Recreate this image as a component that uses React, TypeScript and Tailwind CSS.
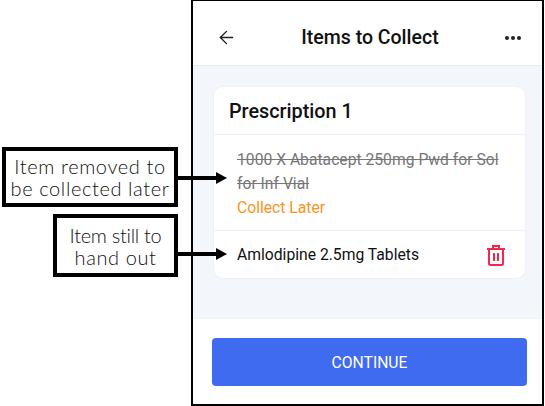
import { ArrowLeft } from "lucide-react";

const Callout = ({ lines, box, arrowTop }: { lines: { text: string, className: string }[], box: string, arrowTop: string }) => {
    return (
        <div className={`relative flex flex-col items-center justify-center border-[4px] border-black bg-white text-[20px] leading-[22px] text-[#111] font-['Lato',sans-serif] font-light ${box}`}>
            {lines.map((line) => (
                <span key={line.text} className={`whitespace-nowrap ${line.className}`}>{line.text}</span>
            ))}
            {/* Arrow pointing into the phone */}
            <svg className={`absolute left-full z-10 ${arrowTop}`} width="53" height="14" viewBox="0 0 53 14">
                <rect x="0" y="5" width="43" height="4" fill="#000" />
                <polygon points="42,1 53,7 42,13" fill="#000" />
            </svg>
        </div>
    )
}

const TrashIcon = () => {
    return (
        <svg width="18" height="21" viewBox="0 0 18 21" fill="none" stroke="#f4264f" strokeWidth="2">
            <path d="M0 4h18" />
            <path d="M6 4V1h6v3" />
            <path d="M2 4v14.5A1.5 1.5 0 0 0 3.500 20h11a1.5 1.5 0 0 0 1.5-1.5V4" />
            <path d="M7 8v8M11 8v8" />
        </svg>
    )
}

export default function App() {
    return (
        <div className="flex h-[406px] w-[545px] overflow-hidden bg-white font-['Roboto',sans-serif]">
            {/* Callouts */}
            <div className="flex w-[191px] shrink-0 flex-col items-end gap-[7px] pr-[13px] pt-[147px]">
                <Callout
                    lines={[
                        { text: "Item removed to", className: "tracking-[0.6px]" },
                        { text: "be collected later", className: "tracking-[0.6px]" },
                    ]}
                    box="w-[176px] h-[60px]"
                    arrowTop="top-[20px]"
                />
                <Callout
                    lines={[
                        { text: "Item still to", className: "tracking-[-0.3px]" },
                        { text: "hand out", className: "tracking-[0.6px]" },
                    ]}
                    box="w-[125px] h-[63px]"
                    arrowTop="top-[29px]"
                />
            </div>

            {/* Phone */}
            <div className="mr-[1px] flex flex-1 flex-col border-x-2 border-b-2 border-t border-black">
                <div className="flex h-[65px] shrink-0 items-center justify-between border-b border-[#e9edf3] pl-[23px] pr-[21px] pt-[9px]">
                    <ArrowLeft size={21} strokeWidth={1.6} color="#222" />
                    <span className="-translate-x-[1px] text-[19.5px] font-medium text-[#111]">Items to Collect</span>
                    <div className="flex gap-[2px]">
                        <span className="h-[4px] w-[4px] rounded-full bg-[#222]" />
                        <span className="h-[4px] w-[4px] rounded-full bg-[#222]" />
                        <span className="h-[4px] w-[4px] rounded-full bg-[#222]" />
                    </div>
                </div>

                <div className="flex-1 bg-[#f3f6fb] pl-[20px] pr-[16px] pt-[20px]">
                    <div className="rounded-[10px] border border-[#eef1f6] bg-white">
                        <div className="flex h-[48px] items-center border-b border-[#eef1f6] pl-[15px] pt-[2px] text-[19.8px] font-medium text-[#111]">
                            Prescription 1
                        </div>
                        <div className="border-b border-[#eef1f6] pb-[10px] pl-[23px] pr-[20px] pt-[13px] text-[15.7px] leading-[24px]">
                            <div className="text-[#777] line-through">1000 X Abatacept 250mg Pwd for Sol for Inf Vial</div>
                            <div className="text-[#f7941d]">Collect Later</div>
                        </div>
                        <div className="flex h-[47px] items-center justify-between pl-[23px] pr-[20px] pt-[1px] text-[15.7px] text-[#111]">
                            <span>Amlodipine 2.5mg Tablets</span>
                            <TrashIcon />
                        </div>
                    </div>
                </div>

                <div className="h-[86px] shrink-0 border-t border-[#eef1f6] pl-[19px] pr-[15px] pt-[19px]">
                    <button className="h-[48px] w-full rounded-[4px] bg-[#3f6bf0] pt-[2px] text-[15.7px] text-white">CONTINUE</button>
                </div>
            </div>
        </div>
    )
}
